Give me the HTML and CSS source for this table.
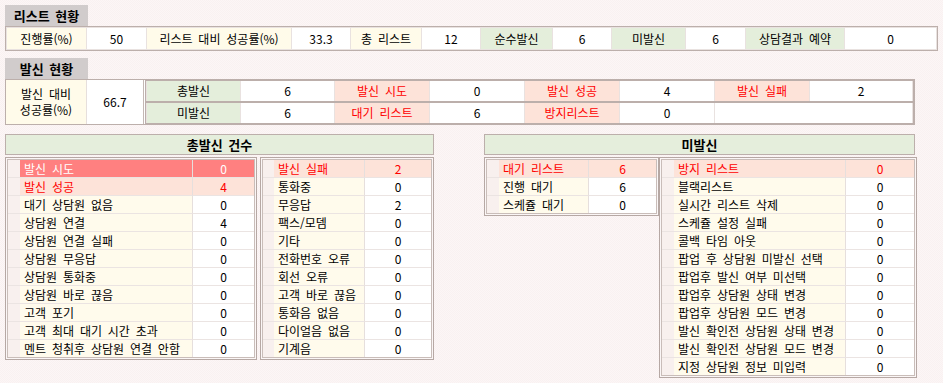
FILE: index.html
```html
<!DOCTYPE html>
<html lang="ko">
<head>
<meta charset="utf-8">
<title>리스트 현황</title>
<link rel="stylesheet" href="styles.css">
</head>
<body>
<div class="page">
  <div class="tab">리스트 현황</div>
  <table class="grid t1">
    <colgroup>
      <col style="width:79px"><col style="width:59px"><col style="width:144px"><col style="width:58px">
      <col style="width:70px"><col style="width:58px"><col style="width:71px"><col style="width:58px">
      <col style="width:73px"><col style="width:59px"><col style="width:98px"><col style="width:91px">
    </colgroup>
    <tr>
      <td class="lc">진행률(%)</td><td class="val">50</td>
      <td class="lc">리스트 대비 성공률(%)</td><td class="val">33.3</td>
      <td class="lc">총 리스트</td><td class="val">12</td>
      <td class="lg">순수발신</td><td class="val">6</td>
      <td class="lg">미발신</td><td class="val">6</td>
      <td class="lg">상담결과 예약</td><td class="val">0</td>
    </tr>
  </table>

  <div class="tab tab2">발신 현황</div>
  <table class="t2">
    <colgroup>
      <col style="width:81px"><col style="width:57px"><col style="width:770px">
    </colgroup>
    <tr>
      <td class="lc rate">발신 대비<br>성공률(%)</td>
      <td class="val rv">66.7</td>
      <td class="nest">
        <table class="grid mini">
          <colgroup>
            <col style="width:93px"><col style="width:93px"><col style="width:94px"><col style="width:94px">
            <col style="width:94px"><col style="width:94px"><col style="width:94px"><col style="width:102px">
          </colgroup>
          <tr>
            <td class="lg">총발신</td><td class="val">6</td>
            <td class="lp">발신 시도</td><td class="val">0</td>
            <td class="lp">발신 성공</td><td class="val">4</td>
            <td class="lp">발신 실패</td><td class="val">2</td>
          </tr>
        </table>
        <table class="grid mini">
          <colgroup>
            <col style="width:93px"><col style="width:93px"><col style="width:94px"><col style="width:94px">
            <col style="width:94px"><col style="width:94px"><col style="width:94px"><col style="width:102px">
          </colgroup>
          <tr>
            <td class="lg">미발신</td><td class="val">6</td>
            <td class="lp">대기 리스트</td><td class="val">6</td>
            <td class="lp">방지리스트</td><td class="val">0</td>
            <td class="val" colspan="2"></td>
          </tr>
        </table>
      </td>
    </tr>
  </table>

  <div class="bottom">
    <section class="block block-left">
      <div class="bar">총발신 건수</div>
      <div class="pair">
        <div class="box box-a">
          <table class="list">
            <colgroup><col style="width:12px"><col style="width:172px"><col style="width:62px"></colgroup>
            <tr class="hot"><td class="b"></td><td class="l">발신 시도</td><td class="v">0</td></tr>
            <tr class="warn"><td class="b"></td><td class="l">발신 성공</td><td class="v">4</td></tr>
            <tr><td class="b"></td><td class="l">대기 상담원 없음</td><td class="v">0</td></tr>
            <tr><td class="b"></td><td class="l">상담원 연결</td><td class="v">4</td></tr>
            <tr><td class="b"></td><td class="l">상담원 연결 실패</td><td class="v">0</td></tr>
            <tr><td class="b"></td><td class="l">상담원 무응답</td><td class="v">0</td></tr>
            <tr><td class="b"></td><td class="l">상담원 통화중</td><td class="v">0</td></tr>
            <tr><td class="b"></td><td class="l">상담원 바로 끊음</td><td class="v">0</td></tr>
            <tr><td class="b"></td><td class="l">고객 포기</td><td class="v">0</td></tr>
            <tr><td class="b"></td><td class="l">고객 최대 대기 시간 초과</td><td class="v">0</td></tr>
            <tr><td class="b"></td><td class="l">멘트 청취후 상담원 연결 안함</td><td class="v">0</td></tr>
          </table>
        </div>
        <div class="box box-b">
          <table class="list">
            <colgroup><col style="width:11px"><col style="width:90px"><col style="width:67px"></colgroup>
            <tr class="warn"><td class="b"></td><td class="l">발신 실패</td><td class="v">2</td></tr>
            <tr><td class="b"></td><td class="l">통화중</td><td class="v">0</td></tr>
            <tr><td class="b"></td><td class="l">무응답</td><td class="v">2</td></tr>
            <tr><td class="b"></td><td class="l">팩스/모뎀</td><td class="v">0</td></tr>
            <tr><td class="b"></td><td class="l">기타</td><td class="v">0</td></tr>
            <tr><td class="b"></td><td class="l">전화번호 오류</td><td class="v">0</td></tr>
            <tr><td class="b"></td><td class="l">회선 오류</td><td class="v">0</td></tr>
            <tr><td class="b"></td><td class="l">고객 바로 끊음</td><td class="v">0</td></tr>
            <tr><td class="b"></td><td class="l">통화음 없음</td><td class="v">0</td></tr>
            <tr><td class="b"></td><td class="l">다이얼음 없음</td><td class="v">0</td></tr>
            <tr><td class="b"></td><td class="l">기계음</td><td class="v">0</td></tr>
          </table>
        </div>
      </div>
    </section>

    <section class="block block-right">
      <div class="bar bar-r">미발신</div>
      <div class="pair pair-r">
        <div class="box box-c">
          <table class="list">
            <colgroup><col style="width:12px"><col style="width:89px"><col style="width:68px"></colgroup>
            <tr class="warn"><td class="b"></td><td class="l">대기 리스트</td><td class="v">6</td></tr>
            <tr><td class="b"></td><td class="l">진행 대기</td><td class="v">6</td></tr>
            <tr><td class="b"></td><td class="l">스케쥴 대기</td><td class="v">0</td></tr>
          </table>
        </div>
        <div class="box box-d">
          <table class="list">
            <colgroup><col style="width:12px"><col style="width:171px"><col style="width:69px"></colgroup>
            <tr class="warn"><td class="b"></td><td class="l">방지 리스트</td><td class="v">0</td></tr>
            <tr><td class="b"></td><td class="l">블랙리스트</td><td class="v">0</td></tr>
            <tr><td class="b"></td><td class="l">실시간 리스트 삭제</td><td class="v">0</td></tr>
            <tr><td class="b"></td><td class="l">스케쥴 설정 실패</td><td class="v">0</td></tr>
            <tr><td class="b"></td><td class="l">콜백 타임 아웃</td><td class="v">0</td></tr>
            <tr><td class="b"></td><td class="l">팝업 후 상담원 미발신 선택</td><td class="v">0</td></tr>
            <tr><td class="b"></td><td class="l">팝업후 발신 여부 미선택</td><td class="v">0</td></tr>
            <tr><td class="b"></td><td class="l">팝업후 상담원 상태 변경</td><td class="v">0</td></tr>
            <tr><td class="b"></td><td class="l">팝업후 상담원 모드 변경</td><td class="v">0</td></tr>
            <tr><td class="b"></td><td class="l">발신 확인전 상담원 상태 변경</td><td class="v">0</td></tr>
            <tr><td class="b"></td><td class="l">발신 확인전 상담원 모드 변경</td><td class="v">0</td></tr>
            <tr><td class="b"></td><td class="l">지정 상담원 정보 미입력</td><td class="v">0</td></tr>
          </table>
        </div>
      </div>
    </section>
  </div>
</div>
</body>
</html>
```

FILE: styles.css
```css
* { box-sizing: border-box; }

html, body {
  margin: 0;
  padding: 0;
}

body {
  background-color: #fbf4f4;
  background-image: repeating-conic-gradient(#fcf6f6 0 25%, #f9f1f1 0 50%);
  background-size: 2px 2px;
  font-family: "Noto Sans CJK KR", "Noto Sans", sans-serif;
  font-size: 12px;
  color: #000;
  word-spacing: 2.5px;
}

.page {
  padding: 5px 5px 0 5px;
}

.tab {
  width: 83px;
  height: 21px;
  background: #d1cccc;
  font-weight: bold;
  font-size: 13px;
  display: flex;
  align-items: center;
  justify-content: center;
  word-spacing: 2px;
  line-height: 1;
}

.tab2 {
  margin-top: 7px;
}

table {
  table-layout: fixed;
  border-collapse: separate;
}

td {
  padding: 0;
  text-align: center;
  vertical-align: middle;
  white-space: nowrap;
  line-height: 14px;
}

.grid {
  border: 1px solid #bcafab;
  background: #e9e2e0;
}

.t1 {
  width: 933px;
  border-spacing: 1px;
}

.t1 td {
  height: 21px;
}

.lc { background: #fffbea; }
.lg { background: #e4eedb; }
.lp { background: #fde3d9; color: #ff0000; }
.val { background: #ffffff; }

.t2 {
  width: 910px;
  border: 1px solid #bcafab;
  border-spacing: 0;
  background: #ffffff;
}

.t2 > tbody > tr > td {
  height: 44px;
}

.rate {
  border-right: 1px solid #e6dfdd;
  line-height: 16px;
}

.rv {
  border-right: 1px solid #c4b8b4;
}

.nest {
  padding-left: 1px;
  vertical-align: top;
}

.mini {
  width: 769px;
  border-spacing: 1px 0;
}

.mini td {
  height: 20px;
}

.bottom {
  display: flex;
  margin-top: 9px;
  align-items: flex-start;
}

.block-left {
  width: 429px;
}

.block-right {
  width: 433px;
  margin-left: 50px;
}

.bar {
  height: 21px;
  border: 1px solid #bcafab;
  background: #e5eedc;
  font-weight: bold;
  font-size: 13px;
  display: flex;
  align-items: center;
  justify-content: center;
  word-spacing: 2px;
}

.bar-r {
  margin-right: 2px;
}

.pair {
  display: flex;
  align-items: flex-start;
  margin-top: 2px;
  gap: 3px;
}

.pair-r {
  gap: 0;
}

.box {
  border: 1px solid #b6a8a4;
  padding: 1px;
  background: #fbf6f6;
}

.box-a { width: 252px; }
.box-b { width: 174px; }
.box-c { width: 175px; }
.box-d { width: 258px; }

.list {
  width: 100%;
  border: 1px solid #c9bdb9;
  border-spacing: 0;
  background: #ffffff;
}

.list td {
  height: 18px;
  border-bottom: 1px solid #ebe4e2;
}

.list tr:last-child td {
  height: 17px;
  border-bottom: 0;
}

.list .b {
  background: #f8f0ee;
}

.list .l {
  text-align: left;
  padding-left: 4px;
  background: #fffbec;
}

.list .v {
  background: #ffffff;
  border-left: 1px solid #e6dfdd;
}

.list .hot .l,
.list .hot .v {
  background: #ff8080;
  color: #ffffff;
}

.list .warn .l,
.list .warn .v {
  background: #fde3d9;
  color: #ff0000;
}
```
